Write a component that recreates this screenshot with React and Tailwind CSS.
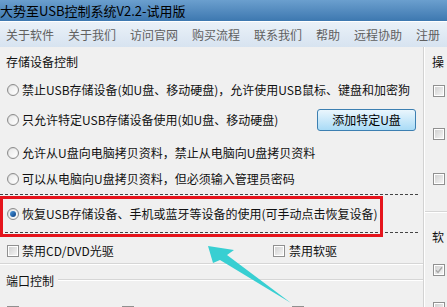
import React from "react";

const Radio = ({ checked }) => (
  <span className="relative flex h-[12px] w-[12px] shrink-0 items-center justify-center rounded-full border border-[#8c8c8c] bg-gradient-to-br from-[#d6d6d6] to-[#fbfbfb]">
    <span className="h-[8px] w-[8px] rounded-full bg-gradient-to-br from-[#e9e9e9] to-[#ffffff]" />
    {checked && (
      <span className="absolute h-[6px] w-[6px] rounded-full bg-gradient-to-br from-[#4d9be0] to-[#0b3f82]" />
    )}
  </span>
);

const Check = ({ checked }) => (
  <span className="flex h-[12px] w-[12px] shrink-0 items-center justify-center border border-[#909090] bg-white">
    <span className="flex h-[8px] w-[8px] items-center justify-center bg-gradient-to-br from-[#d2d2d2] to-[#f4f4f4]">
      {checked && (
        <svg width="8" height="8" viewBox="0 0 8 8">
          <path d="M1 4.2 L3 6.4 L7 1.2" fill="none" stroke="#a8a8a8" strokeWidth="1.4" />
        </svg>
      )}
    </span>
  </span>
);

const menu = ["关于软件", "关于我们", "访问官网", "购买流程", "联系我们", "帮助", "远程协助", "注册"];

export default function App() {
  return (
    <div
      className="relative h-[307px] w-[447px] overflow-hidden bg-[#f0f0f0] text-[12px] text-[#111]"
      style={{ fontFamily: '"Noto Sans CJK SC", "Noto Sans", sans-serif' }}
    >
      <div className="flex h-[21px] items-center bg-gradient-to-b from-[#6b9fce] to-[#3d78b0] pl-0 text-[13px] leading-none whitespace-nowrap text-black">
        大势至USB控制系统V2.2-试用版
      </div>
      <div className="flex h-[26px] items-center gap-[14px] border-t border-white bg-gradient-to-b from-[#eaf1f8] to-[#d7e3f0] pl-[6px] text-[12px] text-[#606060] whitespace-nowrap">
        {menu.map((m) => (
          <span key={m}>{m}</span>
        ))}
      </div>

      <div className="flex">
        <div className="flex w-[423px] shrink-0 flex-col whitespace-nowrap">
          <div className="h-[28px] shrink-0 pl-[6px] pt-[7px] leading-[16px]">存储设备控制</div>
          <div className="flex h-[30px] shrink-0 items-center gap-[3px] pl-[7px]">
            <Radio />
            <span>禁止USB存储设备(如U盘、移动硬盘)，允许使用USB鼠标、键盘和加密狗</span>
          </div>
          <div className="flex h-[30px] shrink-0 items-center pl-[7px]">
            <Radio />
            <span className="ml-[3px]">只允许特定USB存储设备使用(如U盘、移动硬盘)</span>
            <button className="ml-auto mr-[7px] flex h-[22px] w-[99px] items-center justify-center rounded-[3px] border border-[#3c7fb1] bg-gradient-to-b from-[#eaf6fd] to-[#a9dbf6] text-[12px] text-black">
              添加特定U盘
            </button>
          </div>
          <div className="mt-[5px] flex h-[26px] shrink-0 items-center gap-[3px] pl-[7px]">
            <Radio />
            <span>允许从U盘向电脑拷贝资料，禁止从电脑向U盘拷贝资料</span>
          </div>
          <div className="flex h-[26px] shrink-0 items-center gap-[3px] pl-[7px]">
            <Radio />
            <span>可以从电脑向U盘拷贝资料，但必须输入管理员密码</span>
          </div>
          <div className="mt-[2px] mr-[5px] flex h-[39px] shrink-0 items-center gap-[3px] border-y border-dashed border-[#444] pl-[7px]">
            <Radio checked />
            <span>恢复USB存储设备、手机或蓝牙等设备的使用(可手动点击恢复设备)</span>
          </div>
          <div className="flex h-[30px] shrink-0 items-center pl-[7px] pt-[6px]">
            <Check />
            <span className="ml-[3px] w-[251px]">禁用CD/DVD光驱</span>
            <Check />
            <span className="ml-[4px]">禁用软驱</span>
          </div>
          <div className="h-[2px] shrink-0 border-t border-[#d6d6d6] bg-white" />
          <div className="flex h-[32px] shrink-0 items-center pl-[6px]">
            <span>端口控制</span>
            <span className="ml-[4px] mt-[-3px] h-[2px] flex-1 border-t border-[#d6d6d6] bg-white" />
          </div>
          <div className="flex shrink-0 items-start pl-[7px] pt-[9px]">
            <Check />
            <span className="ml-[3px] w-[100px]">禁用串口</span>
            <Check />
            <span className="ml-[3px] w-[155px]">禁用并口</span>
            <Check />
            <span className="ml-[3px]">禁用1394</span>
          </div>
        </div>

        <div className="w-[1px] shrink-0 bg-[#d2d2d2]" />
        <div className="w-[1px] shrink-0 bg-white" />

        <div className="flex flex-1 flex-col overflow-hidden whitespace-nowrap">
          <div className="h-[28px] shrink-0 pl-[7px] pt-[7px] leading-[16px]">操</div>
          <div className="mt-[10px] pl-[8px]"><Check /></div>
          <div className="mt-[31px] pl-[8px]"><Check /></div>
          <div className="mt-[33px] pl-[8px]"><Check /></div>
          <div className="mt-[26px] h-[2px] shrink-0 border-t border-[#d6d6d6] bg-white" />
          <div className="mt-[16px] pl-[7px] leading-[16px]">软</div>
          <div className="mt-[19px] pl-[8px]"><Check checked /></div>
          <div className="mt-[26px] pl-[8px]"><Check /></div>
        </div>
      </div>

      <div className="pointer-events-none absolute left-0 top-[196px] h-[41px] w-[383px] border-[3px] border-[#e5141c]" />

      <svg className="pointer-events-none absolute left-0 top-0" width="447" height="307">
        <polygon points="208,246 234,250 227,255 291,303 220,260 213,263" fill="#38cfd2" />
      </svg>
    </div>
  );
}
